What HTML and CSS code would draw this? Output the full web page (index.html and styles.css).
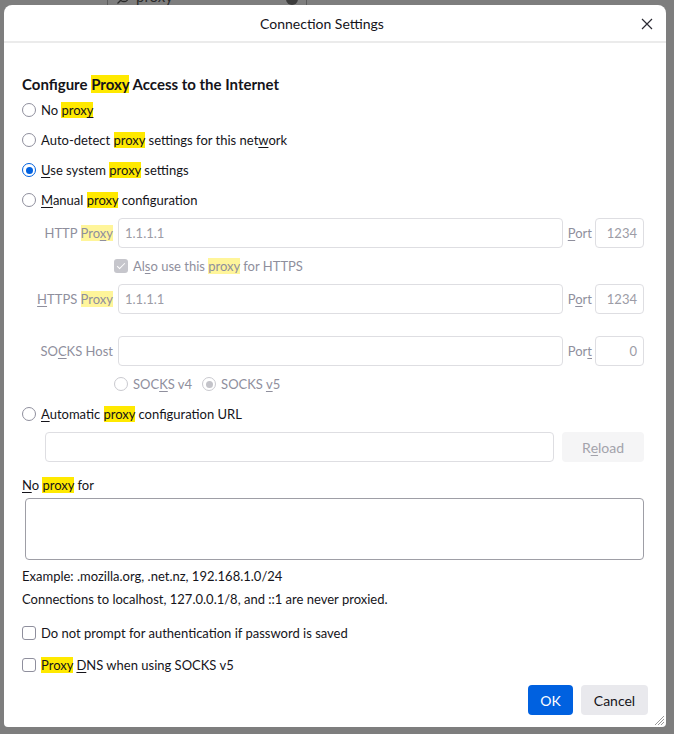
FILE: index.html
```html
<!DOCTYPE html>
<html lang="en">
<head>
    <meta charset="UTF-8">
    <title>Connection Settings</title>
    <link rel="stylesheet" href="styles.css">
</head>
<body>
    <!-- page behind the dialog -->
    <div class="backdrop-search">
        <svg class="search-icon" width="14" height="14" viewBox="0 0 14 14"><circle cx="8" cy="6" r="4.5" fill="none" stroke="#2b2b2b" stroke-width="1.3"/><path d="M4.8 9.2 1.5 12.5" stroke="#2b2b2b" stroke-width="1.3"/></svg>
        <span class="search-text">proxy</span>
        <span class="search-clear"></span>
    </div>

    <div class="dialog">
        <div class="dialog-header">
            <span class="dialog-title">Connection Settings</span>
            <svg class="close-btn" width="12" height="12" viewBox="0 0 12 12"><path d="M1 1 11 11M11 1 1 11" stroke="#2b2a33" stroke-width="1.2"/></svg>
        </div>

        <div class="dialog-body">
            <h1 class="heading">Configure <span class="hl">Proxy</span> Access to the Internet</h1>

            <label class="option"><span class="radio"></span><span>No <span class="hl">prox<u>y</u></span></span></label>
            <label class="option"><span class="radio"></span><span>Auto-detect <span class="hl">proxy</span> settings for this net<u>w</u>ork</span></label>
            <label class="option"><span class="radio checked"></span><span><u>U</u>se system <span class="hl">proxy</span> settings</span></label>
            <label class="option"><span class="radio"></span><span><u>M</u>anual <span class="hl">proxy</span> configuration</span></label>

            <div class="manual-grid">
                <span class="field-label">HTTP <span class="hl dim">Pro<u>x</u>y</span></span>
                <div class="input disabled">1.1.1.1</div>
                <span class="port-label"><u>P</u>ort</span>
                <div class="input disabled port">1234</div>

                <label class="option disabled-text span-rest"><span class="checkbox checked-dim"></span><span>Al<u>s</u>o use this <span class="hl dim">proxy</span> for HTTPS</span></label>

                <span class="field-label"><u>H</u>TTPS <span class="hl dim">Proxy</span></span>
                <div class="input disabled">1.1.1.1</div>
                <span class="port-label">P<u>o</u>rt</span>
                <div class="input disabled port">1234</div>

                <div class="grid-spacer"></div>

                <span class="field-label">SO<u>C</u>KS Host</span>
                <div class="input disabled"></div>
                <span class="port-label">Por<u>t</u></span>
                <div class="input disabled port">0</div>

                <div class="socks-versions span-rest">
                    <label class="option disabled-text"><span class="radio dim"></span><span>SOC<u>K</u>S v4</span></label>
                    <label class="option disabled-text"><span class="radio dim checked-dim"></span><span>SOCKS <u>v</u>5</span></label>
                </div>
            </div>

            <label class="option"><span class="radio"></span><span><u>A</u>utomatic <span class="hl">proxy</span> configuration URL</span></label>
            <div class="url-row">
                <div class="input disabled url"></div>
                <div class="btn disabled-btn">R<u>e</u>load</div>
            </div>

            <div class="no-proxy-label"><span><u>N</u>o <span class="hl">proxy</span> for</span></div>
            <div class="textarea"></div>

            <p class="note first">Example: .mozilla.org, .net.nz, 192.168.1.0/24</p>
            <p class="note">Connections to localhost, 127.0.0.1/8, and ::1 are never proxied.</p>

            <label class="option check-row"><span class="checkbox"></span><span>Do not prompt for authent<u>i</u>cation if password is saved</span></label>
            <label class="option check-row"><span class="checkbox"></span><span><span class="hl">Proxy</span> <u>D</u>NS when using SOCKS v5</span></label>
        </div>

        <div class="dialog-footer">
            <div class="btn primary">OK</div>
            <div class="btn secondary">Cancel</div>
        </div>

        <svg class="grip" width="10" height="10" viewBox="0 0 10 10"><path d="M10 1 1 10M10 4 4 10M10 7 7 10" stroke="#9a9a9a" stroke-width="1"/></svg>
    </div>
</body>
</html>
```

FILE: styles.css
```css
body {
    margin: 0;
    height: 734px;
    background-color: #7e7e7e;
    font-family: Lato, "Liberation Sans", sans-serif;
    font-size: 13px;
    color: #15141a;
    position: relative;
    overflow: hidden;
}

u {
    text-decoration-thickness: 1px;
    text-underline-offset: 2px;
}

/* dimmed search field of the page behind */
.backdrop-search {
    position: absolute;
    left: 107px;
    top: -22px;
    width: 200px;
    height: 40px;
    border: 1px solid #5c5c5c;
    border-radius: 4px;
    display: flex;
    align-items: flex-end;
    gap: 6px;
    padding: 0 8px 12px;
    box-sizing: border-box;
}

.search-text {
    font-size: 15px;
    line-height: 17px;
    color: #2b2b2b;
    flex: 1;
}

.search-clear {
    width: 12px;
    height: 12px;
    border-radius: 50%;
    background: #3c3c3c;
}

.dialog {
    position: relative;
    z-index: 1;
    margin: 5px 0 0 4px;
    width: 662px;
    height: 722px;
    background: #fff;
    border-radius: 8px 8px 4px 4px;
    display: flex;
    flex-direction: column;
}

.dialog-header {
    height: 36px;
    border-bottom: 2px solid #ebebeb;
    display: flex;
    align-items: center;
    justify-content: center;
    padding-right: 26px;
    position: relative;
}

.dialog-title {
    font-size: 14px;
}

.close-btn {
    position: absolute;
    right: 13px;
    top: 13px;
}

.dialog-body {
    padding: 0 22px 0 18px;
    flex: 1;
}

.heading {
    margin: 31px 0 0;
    font-size: 15px;
    font-weight: 700;
    line-height: 20px;
    height: 21px;
}

.hl {
    background: #ffe900;
}

.hl.dim {
    background: #fff59a;
}

.option {
    display: flex;
    align-items: center;
    height: 30px;
    white-space: pre;
}

.radio {
    width: 14px;
    height: 14px;
    border: 1.5px solid #8f8f9d;
    border-radius: 50%;
    box-sizing: border-box;
    margin-right: 5px;
    flex: none;
    position: relative;
}

.radio.checked {
    border-color: #0061e0;
}

.radio.checked::after,
.radio.checked-dim::after {
    content: "";
    position: absolute;
    inset: 2.5px;
    border-radius: 50%;
    background: #0061e0;
}

.radio.dim {
    border-color: #c9c9cf;
}

.radio.checked-dim::after {
    background: #c3c3c9;
}

.checkbox {
    width: 14px;
    height: 14px;
    border: 1.5px solid #8f8f9d;
    border-radius: 3px;
    box-sizing: border-box;
    margin-right: 5px;
    flex: none;
    position: relative;
}

.checkbox.checked-dim {
    border: none;
    background: #c6c6cc;
}

.checkbox.checked-dim::after {
    content: "";
    position: absolute;
    left: 5px;
    top: 2px;
    width: 3px;
    height: 7px;
    border: solid #fff;
    border-width: 0 1.5px 1.5px 0;
    transform: rotate(45deg);
}

.disabled-text {
    color: #8f8f9d;
}

.manual-grid {
    display: grid;
    grid-template-columns: 91px 1fr auto 49px;
    column-gap: 5px;
    row-gap: 3px;
    align-items: center;
    margin-top: 3px;
}

.span-rest {
    grid-column: 2 / 5;
    margin-left: -4px;
}

.field-label {
    text-align: right;
    color: #8f8f9d;
    white-space: pre;
}

.port-label {
    color: #8f8f9d;
    margin-right: -2px;
}

.grid-spacer {
    grid-column: 1 / 5;
    height: 16px;
}

.input {
    height: 30px;
    box-sizing: border-box;
    border: 1px solid #8f8f9d;
    border-radius: 4px;
    display: flex;
    align-items: center;
    padding: 0 6px;
}

.input.disabled {
    border-color: #dedee2;
    color: #9c9ca6;
}

.input.port {
    justify-content: flex-end;
}

.socks-versions {
    display: flex;
    gap: 10px;
}

.url-row {
    display: flex;
    gap: 8px;
    margin: 3px 0 0 23px;
}

.input.url {
    flex: 1;
}

.btn {
    height: 30px;
    border-radius: 4px;
    background: #e9e9ed;
    display: flex;
    align-items: center;
    justify-content: center;
    font-size: 14px;
}

.disabled-btn {
    width: 82px;
    background: #f5f5f6;
    color: #a3a3ab;
}

.no-proxy-label {
    margin-top: 14px;
    height: 18px;
    display: flex;
    align-items: center;
    white-space: pre;
}

.textarea {
    margin: 4px 0 0 3px;
    height: 62px;
    box-sizing: border-box;
    border: 1px solid #9e9ea6;
    border-radius: 4px;
}

.note {
    margin: 7px 0 0;
    line-height: 16px;
}

.note.first {
    margin-top: 8px;
}

.check-row {
    margin-top: 11px;
}

.check-row + .check-row {
    margin-top: 2px;
}

.dialog-footer {
    display: flex;
    justify-content: flex-end;
    gap: 8px;
    padding: 0 18px 12px 0;
}

.btn.primary {
    background: #0061e0;
    color: #fff;
    width: 45px;
}

.btn.secondary {
    width: 67px;
}

.grip {
    position: absolute;
    right: 2px;
    bottom: 2px;
}
```
